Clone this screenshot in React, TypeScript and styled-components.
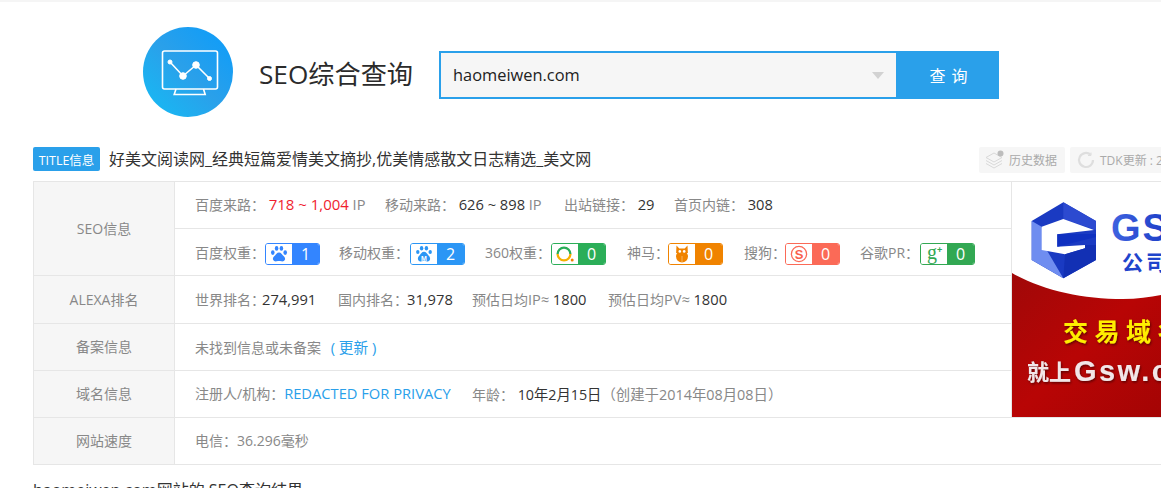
import styled, { createGlobalStyle } from "styled-components"
import { ReactNode } from "react"

const colors = {
    blue: "#2aa0ea",
    grey: "#888888",
    dark: "#333333",
    line: "#e6e6e6",
    panel: "#f6f6f6",
    red: "#f01e2e",
}

const GlobalStyle = createGlobalStyle`
    html, body {
        margin: 0;
        padding: 0;
        background: #fff;
        overflow: hidden;
        height: 488px;
    }
    body {
        font-family: "Open Sans", "Noto Sans CJK SC", sans-serif;
        font-size: 14px;
        color: ${colors.dark};
    }
`

const Baidu = () => (
    <svg width="18" height="18" viewBox="0 0 18 18" fill="#3385ff">
        <ellipse cx="6.6" cy="3.4" rx="1.8" ry="2.4" />
        <ellipse cx="11.4" cy="3.4" rx="1.8" ry="2.4" />
        <ellipse cx="2.8" cy="7.6" rx="1.8" ry="2.3" />
        <ellipse cx="15.2" cy="7.6" rx="1.8" ry="2.3" />
        <path d="M9 7.4c-2.2 0-3 2.2-4.300 3.400C3.400 12 2.600 13.200 3 14.600c.5 1.700 2.400 2 3.800 1.700 1.500-.3 3-.3 4.400 0 1.400.3 3.300 0 3.800-1.700.4-1.400-.4-2.600-1.700-3.800C12 9.600 11.200 7.400 9 7.400z" />
    </svg>
)

const BaiduMobile = () => (
    <svg width="18" height="18" viewBox="0 0 18 18" fill="#2b96f5">
        <ellipse cx="6.6" cy="3.2" rx="1.7" ry="2.2" />
        <ellipse cx="11.4" cy="3.2" rx="1.7" ry="2.2" />
        <ellipse cx="2.8" cy="7" rx="1.7" ry="2.1" />
        <ellipse cx="15.2" cy="7" rx="1.7" ry="2.1" />
        <path d="M9 6.800c-2.200 0-3 2.200-4.300 3.400C3.400 11.400 2.600 12.800 3 14.400c.5 1.800 2.400 2.200 3.800 1.900 1.500-.3 3-.3 4.400 0 1.400.3 3.300-.1 3.800-1.900.4-1.600-.4-3-1.700-4.200C12 9 11.200 6.800 9 6.800z" />
        <text x="9" y="15.5" fontSize="7" fontWeight="700" fill="#fff" textAnchor="middle" fontFamily="Liberation Sans">M</text>
    </svg>
)

const Qihoo = () => (
    <svg width="20" height="18" viewBox="0 0 20 18" fill="none">
        <path d="M2.600 9a6.400 6.400 0 0 1 12.800 0" stroke="#2bae58" strokeWidth="2.300" />
        <path d="M15.400 9a6.400 6.400 0 0 1-12.800 0" stroke="#f5b000" strokeWidth="2.300" />
        <circle cx="17.200" cy="15" r="1.500" fill="#f08200" />
    </svg>
)

const Owl = () => (
    <svg width="14" height="18" viewBox="0 0 14 18" fill="#f08300">
        <path d="M1.500 0.500l2.800 3h5.400l2.800-3 .4 7.500H1.100z" />
        <ellipse cx="7" cy="11.500" rx="6" ry="6" />
        <circle cx="4.800" cy="6.400" r="1.300" fill="#fff" />
        <circle cx="9.200" cy="6.400" r="1.300" fill="#fff" />
        <path d="M7 11v6.500" stroke="#fbc98a" strokeWidth="0.700" />
    </svg>
)

const Sogou = () => (
    <svg width="20" height="20" viewBox="0 0 20 20" fill="none">
        <circle cx="10" cy="10" r="7.600" stroke="#fb6a57" strokeWidth="1.300" />
        <text x="10" y="14.500" fontSize="13" fontWeight="700" fill="#f9604c" textAnchor="middle" fontFamily="Liberation Sans">S</text>
    </svg>
)

const GooglePlus = () => (
    <svg width="22" height="20" viewBox="0 0 22 20">
        <text x="4" y="14.500" fontSize="20" fill="#32a853" fontFamily="Liberation Serif">g</text>
        <text x="14" y="9" fontSize="9" fontWeight="700" fill="#32a853" fontFamily="Liberation Sans">+</text>
    </svg>
)

const Stack = () => (
    <svg width="20" height="20" viewBox="0 0 20 20" fill="none" stroke="#d9d9d9" strokeWidth="1">
        <path d="M9 3L1 7.500l8 4.500 8-4.500z" />
        <path d="M1 10.500l8 4.500 8-4.500" />
        <path d="M1 13.500l8 4.500 8-4.500" />
        <circle cx="15.500" cy="3.500" r="3" fill="#bdbdbd" stroke="none" />
    </svg>
)

const Refresh = () => (
    <svg width="20" height="18" viewBox="-1 0 20 18" fill="none" stroke="#dedede" strokeWidth="2.200">
        <path d="M16 9a7 7 0 1 1-2.300-5.200" />
        <path d="M14 1.500v3h-3" strokeWidth="1" />
    </svg>
)

const Banner = () => (
    <svg width="149" height="235" viewBox="0 0 149 235">
        <defs>
            <linearGradient id="bg" x1="0" y1="0" x2="1" y2="1">
                <stop offset="0" stopColor="#a00808" />
                <stop offset="0.5" stopColor="#b80505" />
                <stop offset="1" stopColor="#a40404" />
            </linearGradient>
            <linearGradient id="letters" x1="0" y1="0" x2="1" y2="0">
                <stop offset="0" stopColor="#3f63e0" />
                <stop offset="1" stopColor="#1b3cc6" />
            </linearGradient>
            <filter id="shade" x="-10%" y="-10%" width="120%" height="130%">
                <feDropShadow dx="1" dy="1.500" stdDeviation="1" floodColor="#500000" floodOpacity="0.8" />
            </filter>
        </defs>
        <rect width="149" height="235" fill="#fff" />
        <path d="M0 91C30 108 70 117 111 117 125 117 138 115 149 113V235H0z" fill="url(#bg)" />
        <path d="M51.300 20.300L84 39v39L51.300 96.300 19.700 78V39z" fill="#1a3ac2" />
        <path d="M51.300 20.300L84 39v9L51.300 37z" fill="#2c4ad0" />
        <path d="M19.700 39l10 5.700 5 23.300 16.600 28.300L19.700 78z" fill="#6f8df0" />
        <path d="M51.300 37L29.700 44.700v23.300L53 72.300 73 66.300V63L45.300 64.700V52.300L82 48z" fill="#fff" />
        <path d="M45.300 52.300L84 52v3L45.300 64.700z" fill="#0f30c0" />
        <path d="M53 72.300L73 66.300V63h11v15L51.300 96.300z" fill="#1230b4" />
        <text x="99" y="59" fontSize="38" fontWeight="700" fill="url(#letters)" fontFamily="Liberation Sans" letterSpacing="2">GS</text>
        <text x="110" y="88" fontSize="21" fontWeight="700" fill="#1f45cc" fontFamily="Noto Sans CJK SC" letterSpacing="3">公司</text>
        <text x="51" y="159" fontSize="25" fontWeight="700" fill="#ffee00" fontFamily="Noto Sans CJK SC" letterSpacing="6.500" filter="url(#shade)">交易域名</text>
        <text x="15" y="198" fontSize="22" fontWeight="700" fill="#f2e6e8" fontFamily="Noto Sans CJK SC" filter="url(#shade)">就上</text>
        <text x="62" y="199" fontSize="29" fontWeight="700" fill="#f2e6e8" fontFamily="Liberation Sans" letterSpacing="2.400" filter="url(#shade)">Gsw.com</text>
    </svg>
)

type TScore = {
    color: string
    icon: ReactNode
    value: number
    nudge?: number
}
const Score = ({ color, icon, value, nudge = 0 }: TScore) => (
    <ScoreBox $color={color} $nudge={nudge}>
        <ScoreIcon>{icon}</ScoreIcon>
        <ScoreValue $color={color}>{value}</ScoreValue>
    </ScoreBox>
)

const App = () => {
    return (
        <Page>
            <GlobalStyle />
            <TopLine />
            <SearchHeader>
                <LogoCircle>
                    <svg width="58" height="46" viewBox="0 0 58 46" fill="none" stroke="#fff">
                        <rect x="1.500" y="1" width="55" height="38" rx="2" strokeWidth="1.600" />
                        <path d="M9 12L22 26 35 15 48.500 28.500" strokeWidth="1.600" />
                        <circle cx="9" cy="12" r="2" fill="#fff" />
                        <circle cx="22" cy="26" r="3.300" fill="#fff" />
                        <circle cx="35" cy="15" r="3.300" fill="#fff" />
                        <circle cx="48.500" cy="28.500" r="2" fill="#fff" />
                        <path d="M15 39l-1.800 5.500h31L42.500 39" strokeWidth="1.600" />
                    </svg>
                </LogoCircle>
                <PageTitle>SEO综合查询</PageTitle>
                <SearchBox>
                    <SearchInput>
                        <span>haomeiwen.com</span>
                        <Caret />
                    </SearchInput>
                    <SearchButton>查 询</SearchButton>
                </SearchBox>
            </SearchHeader>

            <TitleRow>
                <TitleBadge>TITLE信息</TitleBadge>
                <TitleText>好美文阅读网_经典短篇爱情美文摘抄,优美情感散文日志精选_美文网</TitleText>
                <Chips>
                    <Chip $width={86}><Stack />历史数据</Chip>
                    <Chip $width={120}><Refresh />TDK更新 : 2</Chip>
                </Chips>
            </TitleRow>

            <InfoTable>
                <Label $row="1">SEO信息</Label>
                <Cell $row="1">
                    <SubRow>
                        <Item $width={190}>百度来路： <Red>718 ~ 1,004</Red> <Latin>IP</Latin></Item>
                        <Item $width={179}>移动来路： <Dark>626 ~ 898</Dark> <Latin>IP</Latin></Item>
                        <Item $width={110}>出站链接： <Dark>29</Dark></Item>
                        <Item>首页内链： <Dark>308</Dark></Item>
                    </SubRow>
                    <ScoreRow>
                        <ScoreItem $width={144}>百度权重：<Score color="#3385ff" icon={<Baidu />} value={1} /></ScoreItem>
                        <ScoreItem $width={146}>移动权重：<Score color="#2b96f5" icon={<BaiduMobile />} value={2} nudge={1} /></ScoreItem>
                        <ScoreItem $width={142}>360权重：<Score color="#2bae58" icon={<Qihoo />} value={0} /></ScoreItem>
                        <ScoreItem $width={117}>神马：<Score color="#f08300" icon={<Owl />} value={0} nudge={-1} /></ScoreItem>
                        <ScoreItem $width={116}>搜狗：<Score color="#fb6a57" icon={<Sogou />} value={0} nudge={-1} /></ScoreItem>
                        <ScoreItem>谷歌PR：<Score color="#32a853" icon={<GooglePlus />} value={0} nudge={1} /></ScoreItem>
                    </ScoreRow>
                </Cell>

                <Label $row="2">ALEXA排名</Label>
                <Cell $row="2">
                    <SubRow>
                        <Item $width={143}>世界排名：<Dark $pull={3}>274,991</Dark></Item>
                        <Item $width={134}>国内排名：<Dark $pull={1}>31,978</Dark></Item>
                        <Item $width={136}>预估日均<Latin>IP≈</Latin> <Dark>1800</Dark></Item>
                        <Item>预估日均<Latin>PV≈</Latin> <Dark>1800</Dark></Item>
                    </SubRow>
                </Cell>

                <Label $row="3">备案信息</Label>
                <Cell $row="3">
                    <SubRow>
                        <Item>未找到信息或未备案 <Refresher>( 更新 )</Refresher></Item>
                    </SubRow>
                </Cell>

                <Label $row="4">域名信息</Label>
                <Cell $row="4">
                    <SubRow>
                        <Item $width={277}>注册人/机构：<Link>REDACTED FOR PRIVACY</Link></Item>
                        <Item>年龄： <DateText>10年2月15日</DateText><Created>（创建于2014年08月08日）</Created></Item>
                    </SubRow>
                </Cell>

                <Ad><Banner /></Ad>

                <Label $row="5">网站速度</Label>
                <Cell $row="5" $wide>
                    <SubRow>
                        <Item>电信：36.296毫秒</Item>
                    </SubRow>
                </Cell>
            </InfoTable>

            <ResultText>haomeiwen.com网站的 SEO查询结果</ResultText>
        </Page>
    )
}

export default App

const Page = styled.div`
    width: 1400px;
`

const TopLine = styled.div`
    height: 2px;
    background: #f5f5f5;
`

const SearchHeader = styled.div`
    display: flex;
    align-items: center;
    height: 90px;
    margin-top: 25px;
    padding-left: 143px;
`

const LogoCircle = styled.div`
    width: 90px;
    height: 90px;
    border-radius: 50%;
    background: linear-gradient(45deg, #14bdf5 0%, #2aa0ea 50%, #0a9cfb 100%);
    display: flex;
    justify-content: center;
    align-items: center;
    padding: 2px 0 0 3px;
    box-sizing: border-box;
`

const PageTitle = styled.div`
    margin: 2px 0 0 26px;
    width: 180px;
    font-size: 26.2px;
    color: #2b2b2b;
`

const SearchBox = styled.div`
    display: flex;
    width: 560px;
    height: 48px;
    margin-top: 6px;
`

const SearchInput = styled.div`
    width: 459px;
    box-sizing: border-box;
    border: 2px solid ${colors.blue};
    background: #f6f6f6;
    display: flex;
    justify-content: space-between;
    align-items: center;
    padding: 0 12px 2px;
    font-size: 16.4px;
    color: #222;
`

const Caret = styled.i`
    width: 0;
    height: 0;
    margin-top: 2px;
    border-left: 6px solid transparent;
    border-right: 6px solid transparent;
    border-top: 7px solid #d2d2d2;
`

const SearchButton = styled.div`
    width: 101px;
    background: ${colors.blue};
    color: #fff;
    font-size: 16px;
    letter-spacing: 1px;
    padding-left: 1px;
    box-sizing: border-box;
    display: flex;
    justify-content: center;
    align-items: center;
`

const TitleRow = styled.div`
    display: flex;
    align-items: flex-start;
    height: 26px;
    margin-top: 30px;
    padding-left: 33px;
`

const TitleBadge = styled.div`
    width: 67px;
    height: 24px;
    background: ${colors.blue};
    border-radius: 2px;
    color: #fff;
    font-size: 12.5px;
    display: flex;
    justify-content: center;
    align-items: center;
`

const TitleText = styled.div`
    margin-left: 9px;
    width: 870px;
    font-size: 16px;
    line-height: 24px;
    color: #333;
    white-space: nowrap;
`

const Chips = styled.div`
    display: flex;
    gap: 5px;
`

const Chip = styled.div<{ $width: number }>`
    width: ${p => p.$width}px;
    height: 26px;
    box-sizing: border-box;
    padding-left: 6px;
    background: #f6f6f6;
    border-radius: 2px;
    color: #aaa;
    font-size: 12px;
    display: flex;
    align-items: center;
    gap: 4px;
    white-space: nowrap;
`

const InfoTable = styled.div`
    display: grid;
    grid-template-columns: 141px 837px 1fr;
    grid-template-rows: 94px 48px 47px 47px 47px;
    width: 1200px;
    margin-top: 8px;
    margin-left: 33px;
    border-top: 1px solid ${colors.line};
    border-left: 1px solid ${colors.line};
    box-sizing: border-box;
`

const Label = styled.div<{ $row: string }>`
    grid-column: 1;
    grid-row: ${p => p.$row};
    background: ${colors.panel};
    border-right: 1px solid ${colors.line};
    border-bottom: 1px solid ${colors.line};
    color: ${colors.grey};
    padding-bottom: 2px;
    box-sizing: border-box;
    display: flex;
    justify-content: center;
    align-items: center;
`

const Cell = styled.div<{ $row: string; $wide?: boolean }>`
    grid-column: ${p => (p.$wide ? "2 / 4" : "2")};
    grid-row: ${p => p.$row};
    display: flex;
    flex-direction: column;
    border-bottom: 1px solid ${colors.line};
    border-right: ${p => (p.$wide ? "none" : `1px solid ${colors.line}`)};
    min-width: 0;
`

const SubRow = styled.div`
    flex: 1;
    display: flex;
    align-items: center;
    padding: 0 0 2px 20px;
    color: ${colors.grey};
`

const ScoreRow = styled(SubRow)`
    flex: 0 0 47px;
    box-sizing: border-box;
    padding-bottom: 0;
    border-top: 1px solid ${colors.line};
`

const Item = styled.div<{ $width?: number }>`
    width: ${p => (p.$width ? `${p.$width}px` : "auto")};
    flex-shrink: 0;
    white-space: pre;
`

const ScoreItem = styled(Item)`
    display: flex;
    align-items: center;
`

const Red = styled.span`
    color: ${colors.red};
    font-size: 15px;
`

const Dark = styled.span<{ $pull?: number }>`
    color: ${colors.dark};
    font-size: 14.7px;
    margin-left: ${p => -(p.$pull ?? 0)}px;
`

const DateText = styled.span`
    color: ${colors.dark};
    font-size: 14.3px;
`

const Latin = styled.span`
    font-size: 14.6px;
`

const Created = styled.span`
    font-size: 14.4px;
`

const Link = styled.span`
    color: ${colors.blue};
    font-size: 14.7px;
`

const Refresher = styled(Link)`
    margin-left: 6px;
`

const ScoreBox = styled.div<{ $color: string; $nudge: number }>`
    display: flex;
    width: 55px;
    height: 22px;
    margin: 4px 0 0 ${p => p.$nudge}px;
    box-sizing: border-box;
    border: 1px solid ${p => p.$color};
    border-radius: 3px;
    overflow: hidden;
`

const ScoreIcon = styled.div`
    width: 26px;
    background: #fff;
    display: flex;
    justify-content: center;
    align-items: center;
`

const ScoreValue = styled.div<{ $color: string }>`
    flex: 1;
    background: ${p => p.$color};
    color: #fff;
    font-size: 16px;
    display: flex;
    justify-content: center;
    align-items: center;
`

const Ad = styled.div`
    grid-column: 3;
    grid-row: 1 / 5;
    height: 235px;
    overflow: hidden;
    border-bottom: 1px solid ${colors.line};
`

const ResultText = styled.div`
    margin-top: 12px;
    margin-left: 33px;
    font-size: 16px;
    color: #333;
`
